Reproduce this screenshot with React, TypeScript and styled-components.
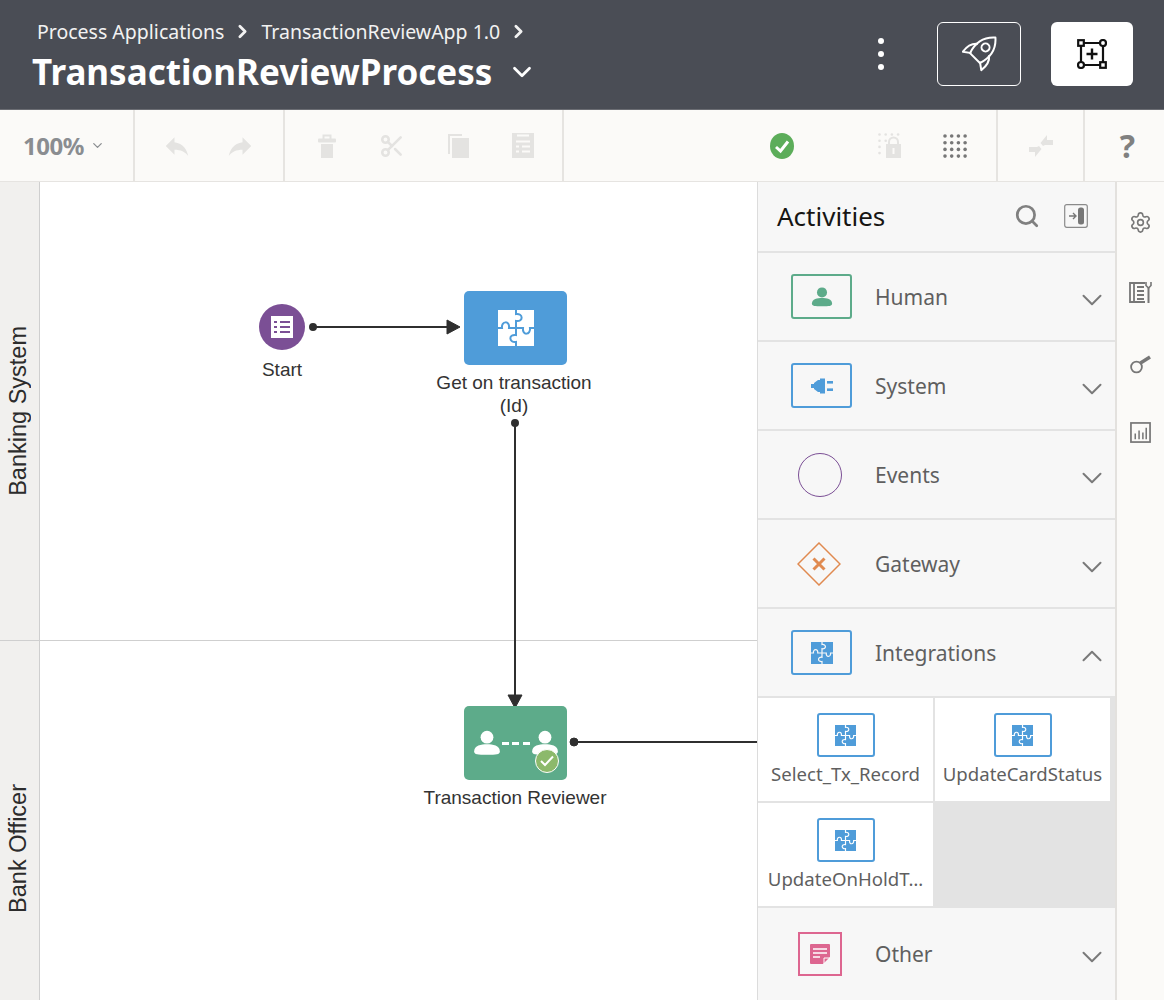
import React, {FunctionComponent} from "react";
import styled, {createGlobalStyle} from "styled-components";
import {ChevronDown, ChevronRight, ChevronUp, Scissors, Search, Settings} from "lucide-react";
import {MdReply} from "react-icons/md";

const Blue = "#4f9cd9";
const Green = "#5dab8a";
const Disabled = "#e4e3e1";

const Puzzle: FunctionComponent<{size: number; fill: string; gap: string}> = ({size, fill, gap}) => (
    <svg width={size} height={size} viewBox="0 0 36 36">
        <rect width="36" height="36" fill={fill} />
        {[0, 90, 180, 270].map(r => (
            <path key={r} transform={`rotate(${r} 18 18)`} fill="none" stroke={gap} strokeWidth="2"
                  d="M18 0 V4 C25 3 26 12 18 11 V18" />
        ))}
    </svg>
);

const Person: FunctionComponent<{size: number; color: string}> = ({size, color}) => (
    <svg width={size} height={size} viewBox="0 0 24 24" fill={color}>
        <circle cx="12" cy="7" r="5.5" />
        <path d="M1 19 C1 14 7 13 12 13 C17 13 23 14 23 19 C23 22 20 22 12 22 C4 22 1 22 1 19 Z" />
    </svg>
);

const Plug = () => (
    <svg width="22" height="16" viewBox="0 0 22 16" fill={Blue}>
        <rect x="0" y="6" width="4" height="4" />
        <path d="M3 5 L7 2 H9 V0.5 H14 V15.5 H9 V14 H7 L3 11 Z" />
        <rect x="16" y="3" width="6" height="2.6" />
        <rect x="16" y="10.4" width="6" height="2.6" />
    </svg>
);

const Diamond = () => (
    <svg width="44" height="44" viewBox="0 0 44 44">
        <path d="M22 1 L43 22 L22 43 L1 22 Z" fill="none" stroke="#e08a50" strokeWidth="1.5" />
        <path d="M16.5 16.5 L27.5 27.5 M27.5 16.5 L16.5 27.5" stroke="#e08a50" strokeWidth="3" />
    </svg>
);

const Note = () => (
    <svg width="20" height="20" viewBox="0 0 20 20">
        <path d="M0 1 Q0 0 1 0 H19 Q20 0 20 1 V13 L13 20 H1 Q0 20 0 19 Z" fill="#dd6690" />
        <path d="M3 5 H17 M3 9 H17 M3 13 H10" stroke="#fff" strokeWidth="1.4" />
        <path d="M14 20 V14 H20" fill="none" stroke="#fff" strokeWidth="1" />
    </svg>
);

const Rocket = () => (
    <svg width="35" height="38" viewBox="0 4 35 38" fill="none" stroke="#fff" strokeWidth="2" strokeLinejoin="round">
        <g transform="rotate(45 20 20)">
            <path d="M13 30 C9 18 12 8 20 1 C28 8 31 18 27 30 Z" />
            <circle cx="20" cy="15" r="4" />
            <path d="M12 18 C7 22 6 27 7 34 L14 29" />
            <path d="M28 18 C33 22 34 27 33 34 L26 29" />
        </g>
    </svg>
);

const Frame = () => (
    <svg width="30" height="30" viewBox="0 0 30 30" fill="none" stroke="#111" strokeWidth="2.2">
        <path d="M4 4 H26 V26 H4 Z" />
        <rect x="1.2" y="1.2" width="5.6" height="5.6" fill="#fff" />
        <circle cx="26" cy="4" r="3" fill="#fff" />
        <circle cx="4" cy="26" r="3" fill="#fff" />
        <rect x="23.2" y="23.2" width="5.6" height="5.6" fill="#fff" />
        <path d="M15 9.5 V20.5 M9.5 15 H20.5" strokeWidth="2.4" />
    </svg>
);

const Trash = () => (
    <svg width="18" height="24" viewBox="0 0 18 24" fill={Disabled}>
        <path d="M5.5 5 V1.5 H12.5 V5" fill="none" stroke={Disabled} strokeWidth="2" />
        <rect x="0" y="4.5" width="18" height="4" rx="1" />
        <rect x="3" y="10" width="12" height="14" />
    </svg>
);

const CopyDoc = () => (
    <svg width="21" height="24" viewBox="0 0 21 24" fill={Disabled}>
        <path d="M0 20 V0 H14 V2 H2 V20 Z" />
        <rect x="4" y="4" width="17" height="20" />
    </svg>
);

const ClipList = () => (
    <svg width="22" height="25" viewBox="0 0 22 25">
        <rect width="22" height="25" fill={Disabled} />
        <path d="M5 1.5 H17 V3.5 H5 Z" fill="#fbfaf8" />
        <path d="M4 8.5 H18 M4 13.5 H7 M10 13.5 H18 M4 18.5 H7 M10 18.5 H18" stroke="#fbfaf8" strokeWidth="1.8" />
    </svg>
);

const GridDots: FunctionComponent<{color: string}> = ({color}) => (
    <svg width="24" height="24" viewBox="0 0 24 24" fill={color}>
        {[0, 1, 2, 3].map(r => [0, 1, 2, 3].map(c => (
            <circle key={`${r}-${c}`} cx={2 + c * 6.7} cy={2 + r * 6.7} r="1.8" />
        )))}
    </svg>
);

const LockDots = () => (
    <svg width="24" height="25" viewBox="0 0 24 25">
        <g fill={Disabled}>
            {[0, 1, 2, 3].map(c => <circle key={c} cx={1.5 + c * 6.2} cy="1.5" r="1.3" />)}
            {[1, 2, 3].map(r => <circle key={r} cx="1.5" cy={1.5 + r * 6.2} r="1.3" />)}
            <circle cx="7.7" cy="7.7" r="1.3" />
        </g>
        <path d="M11 12 V9 A4.5 4.5 0 0 1 20 9 V12" fill="none" stroke={Disabled} strokeWidth="2" />
        <rect x="8" y="11" width="15" height="14" fill={Disabled} />
        <rect x="14.5" y="15" width="2" height="6" fill="#fbfaf8" />
    </svg>
);

const Collapse = () => (
    <svg width="26" height="24" viewBox="0 0 26 24" fill={Disabled}>
        <path d="M12.5 9 L19 1 V6 H25 V11 H17 L15 12 Z" />
        <path d="M13.5 15 L7 23 V18 H1 V13 H9 L11 12 Z" />
    </svg>
);

const StatusCheck = () => (
    <svg width="24" height="26" viewBox="0 0 24 26">
        <ellipse cx="12" cy="13" rx="12" ry="13" fill="#5cad5a" />
        <path d="M6 14 L10.5 18 L18 8.5" fill="none" stroke="#fff" strokeWidth="3" />
    </svg>
);

const PanelToggle = () => (
    <svg width="24" height="24" viewBox="0 0 24 24" fill="none">
        <rect x="0.7" y="0.7" width="22.6" height="22.6" rx="2" stroke="#8a8a8a" strokeWidth="1.2" />
        <path d="M5 12 H11 M9 9 L12 12 L9 15" stroke="#777" strokeWidth="1.4" />
        <rect x="14" y="3.5" width="6" height="17" rx="2.5" fill="#777" />
    </svg>
);

const DocTool = () => (
    <svg width="23" height="22" viewBox="0 0 23 22" fill="none" stroke="#777" strokeWidth="1.8">
        <path d="M16 2 H1 V21 H16" />
        <path d="M5 2 V21 M8 6 H15 M8 10 H15 M8 14 H15 M8 18 H15" />
        <path d="M19.5 7 V22" strokeWidth="2" />
        <path d="M17 1 V4.5 L19.5 7 L22 4.5 V1" strokeWidth="1.6" />
    </svg>
);

const KeyIcon = () => (
    <svg width="21" height="24" viewBox="0 -5 21 24" fill="none" stroke="#777" strokeWidth="1.8">
        <circle cx="6.5" cy="12" r="5.4" />
        <path d="M10.5 8 L20 2" strokeWidth="3.4" />
    </svg>
);

const ChartIcon = () => (
    <svg width="21" height="21" viewBox="0 0 22 22" fill="none" stroke="#777" strokeWidth="1.8">
        <rect x="1" y="1" width="20" height="20" />
        <path d="M5.5 18 V12 M9.5 18 V9 M13.5 18 V11 M17 18 V6" strokeWidth="1.6" />
    </svg>
);

const Connectors = () => (
    <Wires width="760" height="818">
        <g fill="#2f2f2f" stroke="#2f2f2f" strokeWidth="2">
            <circle cx="313" cy="145" r="3" />
            <path d="M313 145 H448" />
            <path d="M447 138 L460 145 L447 152 Z" strokeWidth="1" />
            <circle cx="515" cy="241" r="3" />
            <path d="M515 241 V514" />
            <path d="M508 513 H522 L515 526 Z" strokeWidth="1" />
            <circle cx="574" cy="560" r="4" strokeWidth="1" />
            <path d="M574 560 H757" />
        </g>
    </Wires>
);

const activityIcon = (kind: string) => {
    switch (kind) {
        case "Human": return <IconBox $color={Green}><Person size={22} color={Green} /></IconBox>;
        case "System": return <IconBox $color={Blue}><Plug /></IconBox>;
        case "Events": return <EventCircle />;
        case "Gateway": return <Tilted><Diamond /></Tilted>;
        case "Integrations": return <IconBox $color={Blue}><Puzzle size={22} fill={Blue} gap="#f7f7f7" /></IconBox>;
        default: return <NoteBox><Note /></NoteBox>;
    }
};

const ActivityRow: FunctionComponent<{name: string; open?: boolean; last?: boolean}> = ({name, open, last}) => (
    <Row $last={last}>
        <IconSlot>{activityIcon(name)}</IconSlot>
        <RowLabel>{name}</RowLabel>
        <RowChevron>{open ? <ChevronUp size={34} strokeWidth={1.4} /> : <ChevronDown size={34} strokeWidth={1.4} />}</RowChevron>
    </Row>
);

const IntegrationCard: FunctionComponent<{name: string}> = ({name}) => (
    <Card>
        <CardIcon><Puzzle size={21} fill={Blue} gap="#fff" /></CardIcon>
        <CardLabel>{name}</CardLabel>
    </Card>
);

export default function App() {
    return (
        <Page>
            <GlobalStyle />
            <Header>
                <Titles>
                    <Crumbs>
                        Process Applications
                        <ChevronRight size={21} strokeWidth={3.2} />
                        TransactionReviewApp 1.0
                        <ChevronRight size={21} strokeWidth={3.2} />
                    </Crumbs>
                    <Title>
                        TransactionReviewProcess
                        <ChevronDown size={30} strokeWidth={2.2} />
                    </Title>
                </Titles>
                <Kebab><span /><span /><span /></Kebab>
                <OutlineButton><Rocket /></OutlineButton>
                <SolidButton><Frame /></SolidButton>
            </Header>
            <Toolbar>
                <ZoomGroup>100%<ChevronDown size={15} strokeWidth={2} /></ZoomGroup>
                <UndoGroup>
                    <MdReply size={30} />
                    <Flip><MdReply size={30} /></Flip>
                </UndoGroup>
                <EditGroup>
                    <Trash />
                    <Scissors size={26} strokeWidth={2.4} />
                    <CopyDoc />
                    <ClipList />
                </EditGroup>
                <StatusGroup>
                    <StatusSlot><StatusCheck /></StatusSlot>
                    <LockDots />
                    <GridDots color="#777" />
                </StatusGroup>
                <CollapseGroup><Collapse /></CollapseGroup>
                <HelpGroup>?</HelpGroup>
            </Toolbar>
            <Main>
                <Canvas>
                    <Lane $height={459}>
                        <LaneTitle><span>Banking System</span></LaneTitle>
                    </Lane>
                    <Lane $height={416}>
                        <LaneTitle><span>Bank Officer</span></LaneTitle>
                    </Lane>
                    <Connectors />
                    <StartNode>
                        <svg width="26" height="26" viewBox="0 0 26 26">
                            <rect x="2" y="2" width="22" height="22" fill="#fff" />
                            <path d="M5 8 H8 M11 8 H21 M5 13 H8 M11 13 H21 M5 18 H8 M11 18 H21" stroke="#7b4f95" strokeWidth="1.8" />
                        </svg>
                    </StartNode>
                    <NodeLabel $x={282} $y={176}>Start</NodeLabel>
                    <TaskNode $color={Blue} $y={109}>
                        <Puzzle size={36} fill="#fff" gap={Blue} />
                    </TaskNode>
                    <NodeLabel $x={514} $y={189}>Get on transaction<br />(Id)</NodeLabel>
                    <TaskNode $color={Green} $y={524}>
                        <Reviewers>
                            <Person size={28} color="#fff" />
                            <Dashes />
                            <Person size={28} color="#fff" />
                        </Reviewers>
                        <Badge>
                            <svg width="14" height="12" viewBox="0 0 14 12">
                                <path d="M1 6 L5 10 L13 1.5" fill="none" stroke="#fff" strokeWidth="2" />
                            </svg>
                        </Badge>
                    </TaskNode>
                    <NodeLabel $x={515} $y={604}>Transaction Reviewer</NodeLabel>
                </Canvas>
                <Panel>
                    <PanelHead>
                        Activities
                        <Search size={26} color="#808080" strokeWidth={2.5} />
                        <PanelToggle />
                    </PanelHead>
                    <ActivityRow name="Human" />
                    <ActivityRow name="System" />
                    <ActivityRow name="Events" />
                    <ActivityRow name="Gateway" />
                    <ActivityRow name="Integrations" open />
                    <CardGrid>
                        <IntegrationCard name="Select_Tx_Record" />
                        <IntegrationCard name="UpdateCardStatus" />
                        <IntegrationCard name="UpdateOnHoldT…" />
                    </CardGrid>
                    <ActivityRow name="Other" last />
                </Panel>
                <Rail>
                    <RailItem><Settings size={23} color="#777" strokeWidth={1.7} /></RailItem>
                    <RailItem><DocTool /></RailItem>
                    <RailItem><KeyIcon /></RailItem>
                    <RailItem><ChartIcon /></RailItem>
                </Rail>
            </Main>
        </Page>
    );
}

const GlobalStyle = createGlobalStyle`
  body {
    margin: 0;
    background: #fff;
    font-family: "Noto Sans", sans-serif;
  }
`;

const Page = styled.div`
  width: 1164px;
  height: 1000px;
  overflow: hidden;
  display: flex;
  flex-direction: column;
`;

const Header = styled.div`
  height: 110px;
  flex: none;
  box-sizing: border-box;
  background: #4a4d55;
  border-bottom: 1px solid #6b6d73;
  display: flex;
  align-items: flex-start;
  color: white;
  padding: 21px 31px 0 32px;
`;

const Titles = styled.div`
  flex: 1;
  display: flex;
  flex-direction: column;
`;

const Crumbs = styled.div`
  display: flex;
  align-items: center;
  gap: 8px;
  height: 20px;
  padding-left: 5px;
  font-size: 19.5px;
  color: #f2f2f2;
`;

const Title = styled.div`
  display: flex;
  align-items: center;
  gap: 15px;
  margin-top: 9px;
  font-size: 35px;
  line-height: 44px;
  font-weight: 700;
`;

const Kebab = styled.div`
  display: flex;
  flex-direction: column;
  gap: 7px;
  margin: 17px 53px 0 0;
  span {
    width: 6px;
    height: 6px;
    border-radius: 50%;
    background: white;
  }
`;

const OutlineButton = styled.div`
  width: 84px;
  height: 64px;
  margin-top: 1px;
  box-sizing: border-box;
  border: 1.5px solid white;
  border-radius: 6px;
  display: flex;
  align-items: center;
  justify-content: center;
`;

const SolidButton = styled.div`
  width: 82px;
  height: 64px;
  margin: 1px 0 0 30px;
  background: white;
  border-radius: 6px;
  display: flex;
  align-items: center;
  justify-content: center;
`;

const Toolbar = styled.div`
  height: 72px;
  flex: none;
  box-sizing: border-box;
  background: #fbfaf8;
  border-bottom: 1px solid #e6e4e1;
  display: flex;
  color: ${Disabled};
`;

const Group = styled.div`
  display: flex;
  align-items: center;
  box-sizing: border-box;
  border-right: 2px solid #e6e4e1;
`;

const ZoomGroup = styled(Group)`
  width: 135px;
  padding-left: 23px;
  gap: 6px;
  font-size: 24px;
  font-weight: 700;
  letter-spacing: -0.5px;
  color: #8a8d91;
`;

const UndoGroup = styled(Group)`
  width: 150px;
  padding-left: 27px;
  gap: 33px;
`;

const Flip = styled.span`
  display: flex;
  transform: scaleX(-1);
`;

const EditGroup = styled(Group)`
  width: 279px;
  padding-left: 33px;
  gap: 43px;
`;

const StatusGroup = styled(Group)`
  width: 434px;
  justify-content: flex-end;
  padding-right: 29px;
  gap: 41px;
`;

const StatusSlot = styled.div`
  display: flex;
  margin-right: 43px;
`;

const CollapseGroup = styled(Group)`
  width: 87px;
  justify-content: center;
`;

const HelpGroup = styled.div`
  flex: 1;
  display: flex;
  align-items: center;
  justify-content: center;
  padding-left: 6px;
  font-size: 32px;
  font-weight: 700;
  color: #808080;
`;

const Main = styled.div`
  flex: 1;
  min-height: 0;
  display: flex;
`;

const Canvas = styled.div`
  position: relative;
  width: 757px;
  flex: none;
`;

const Lane = styled.div<{$height: number}>`
  height: ${p => p.$height}px;
  box-sizing: border-box;
  border-bottom: 1px solid #cfcfcf;
  display: flex;
`;

const LaneTitle = styled.div`
  width: 40px;
  box-sizing: border-box;
  background: #f1f0ee;
  border-right: 1px solid #cfcfcf;
  display: flex;
  align-items: center;
  justify-content: center;
  padding-right: 3px;
  span {
    writing-mode: vertical-rl;
    transform: rotate(180deg);
    font-family: "Liberation Sans", Arial, sans-serif;
    font-size: 23.5px;
    color: #2c2c2c;
  }
`;

const Wires = styled.svg`
  position: absolute;
  left: 0;
  top: 0;
`;

const StartNode = styled.div`
  position: absolute;
  left: 259px;
  top: 122px;
  width: 46px;
  height: 46px;
  border-radius: 50%;
  background: #7b4f95;
  display: flex;
  align-items: center;
  justify-content: center;
`;

const TaskNode = styled.div<{$color: string; $y: number}>`
  position: absolute;
  left: 464px;
  top: ${p => p.$y}px;
  width: 103px;
  height: 74px;
  border-radius: 5px;
  background: ${p => p.$color};
  display: flex;
  align-items: center;
  justify-content: center;
`;

const NodeLabel = styled.div<{$x: number; $y: number}>`
  position: absolute;
  left: ${p => p.$x}px;
  top: ${p => p.$y}px;
  transform: translateX(-50%);
  white-space: nowrap;
  text-align: center;
  font-family: "Liberation Sans", Arial, sans-serif;
  font-size: 19px;
  line-height: 23px;
  color: #333;
`;

const Reviewers = styled.div`
  display: flex;
  align-items: center;
  gap: 1px;
`;

const Dashes = styled.div`
  width: 28px;
  height: 3px;
  background: repeating-linear-gradient(90deg, #fff 0 7px, transparent 7px 10.5px);
`;

const Badge = styled.div`
  position: absolute;
  right: 8px;
  bottom: 7px;
  width: 24px;
  height: 24px;
  box-sizing: border-box;
  border-radius: 50%;
  background: #8cb96b;
  border: 1.5px solid #fff;
  display: flex;
  align-items: center;
  justify-content: center;
`;

const Panel = styled.div`
  width: 358px;
  flex: none;
  box-sizing: border-box;
  position: relative;
  background: #f7f7f7;
  border-left: 1px solid #dcdcdc;
  display: flex;
  flex-direction: column;
`;

const PanelHead = styled.div`
  height: 71px;
  flex: none;
  box-sizing: border-box;
  border-bottom: 2px solid #e3e3e3;
  padding: 0 27px 1px 19px;
  display: flex;
  align-items: center;
  font-size: 26px;
  color: #161513;
  svg:first-of-type {
    margin-left: auto;
  }
  svg:last-of-type {
    margin-left: 24px;
  }
`;

const Row = styled.div<{$last?: boolean}>`
  height: ${p => (p.$last ? 91 : 89)}px;
  flex: none;
  box-sizing: border-box;
  border-bottom: ${p => (p.$last ? "none" : "2px solid #e3e3e3")};
  padding: 0 6px 0 33px;
  display: flex;
  align-items: center;
`;

const IconSlot = styled.div`
  width: 61px;
  display: flex;
  justify-content: center;
`;

const IconBox = styled.div<{$color: string}>`
  width: 61px;
  height: 45px;
  box-sizing: border-box;
  border: 2px solid ${p => p.$color};
  border-radius: 3px;
  display: flex;
  align-items: center;
  justify-content: center;
`;

const EventCircle = styled.div`
  width: 44px;
  height: 44px;
  margin-right: 3px;
  box-sizing: border-box;
  border: 1.5px solid #7b4f95;
  border-radius: 50%;
`;

const Tilted = styled.div`
  display: flex;
  margin-right: 6px;
`;

const NoteBox = styled.div`
  width: 44px;
  height: 44px;
  margin-right: 3px;
  box-sizing: border-box;
  border: 2px solid #dd6690;
  display: flex;
  align-items: center;
  justify-content: center;
`;

const RowLabel = styled.div`
  margin: 1px 0 0 23px;
  font-size: 21px;
  color: #5f5f5f;
`;

const RowChevron = styled.div`
  margin-left: auto;
  margin-top: 6px;
  display: flex;
  color: #7a7a7a;
`;

const CardGrid = styled.div`
  flex: none;
  display: grid;
  grid-template-columns: 175px 175px;
  grid-auto-rows: 103px;
  gap: 2px;
  padding: 0 5px 2px 0;
  background: #e3e3e3;
`;

const Card = styled.div`
  background: white;
  display: flex;
  flex-direction: column;
  align-items: center;
  padding-top: 15px;
`;

const CardIcon = styled.div`
  width: 58px;
  height: 44px;
  box-sizing: border-box;
  border: 2px solid ${Blue};
  border-radius: 3px;
  display: flex;
  align-items: center;
  justify-content: center;
`;

const CardLabel = styled.div`
  margin-top: 4px;
  font-size: 18.6px;
  white-space: nowrap;
  color: #5f5f5f;
`;

const Rail = styled.div`
  flex: 1;
  background: #fbfaf8;
  border-left: 2px solid #e3e1de;
  display: flex;
  flex-direction: column;
  align-items: center;
  gap: 46px;
  padding-top: 28px;
`;

const RailItem = styled.div`
  height: 24px;
  display: flex;
  align-items: center;
  justify-content: center;
`;
